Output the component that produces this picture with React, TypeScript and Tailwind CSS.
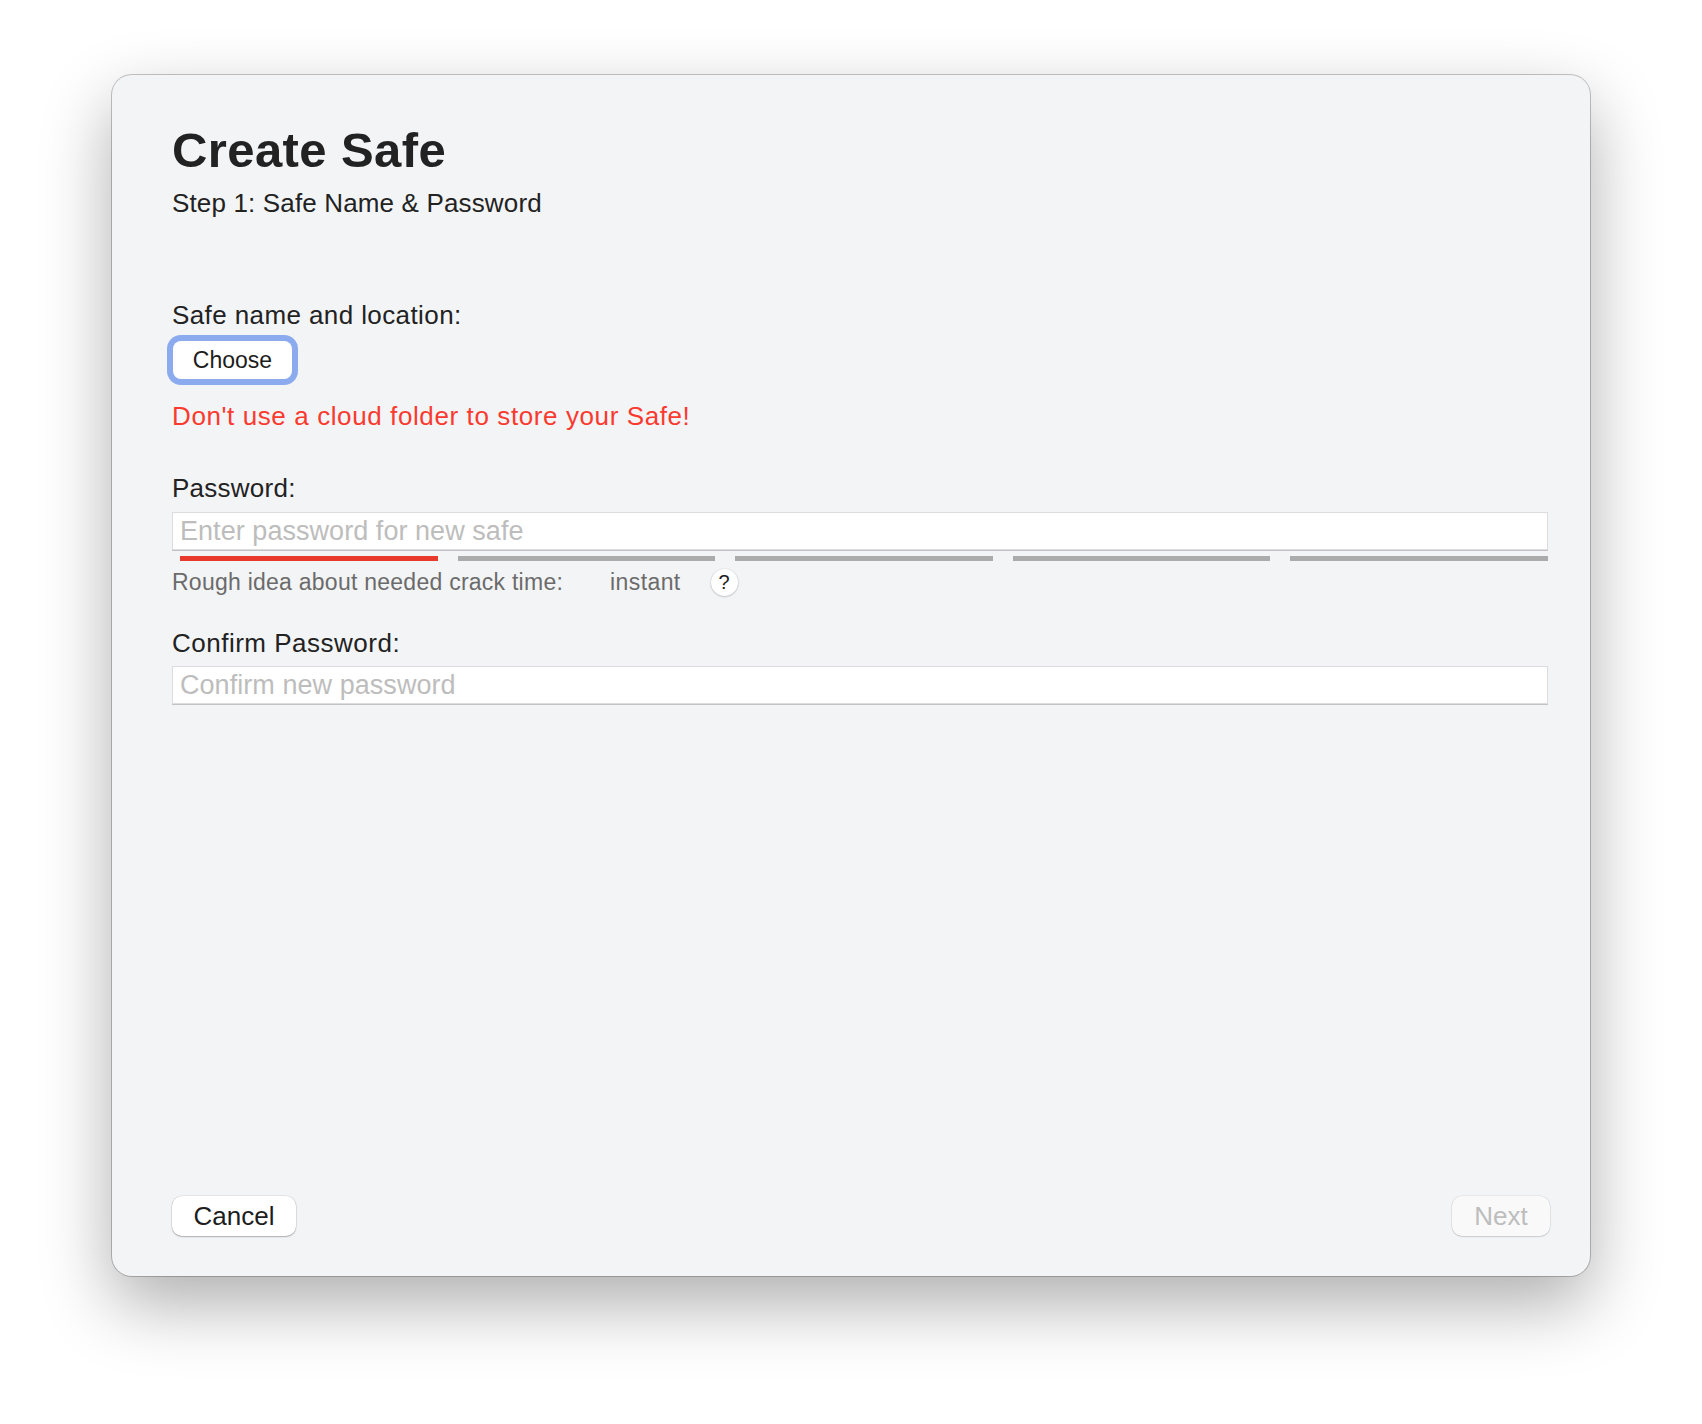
import React from "react";

const font = { fontFamily: '"Liberation Sans", Arial, sans-serif' };

function StrengthBars({ level }: { level: number }) {
  return (
    <div className="mt-[6px] flex h-[5px] gap-[20px] pl-[8px]">
      {[0, 1, 2, 3, 4].map((i) => (
        <div key={i} className={i < level ? "flex-1 bg-[#e8392d]" : "flex-1 bg-[#ababab]"} />
      ))}
    </div>
  );
}

function TextField({ placeholder }: { placeholder: string }) {
  return (
    <input
      type="password"
      placeholder={placeholder}
      className="h-[38px] w-full border border-[#dcdcdf] bg-white px-[7px] text-[27px] tracking-[0.05px] text-[#222] shadow-[0_1px_0_#c2c2c4] outline-none placeholder:text-[#bdbdbd]"
    />
  );
}

export default function App() {
  return (
    <div className="min-h-[1424px] bg-white pl-[112px] pt-[75px]" style={font}>
      <div className="flex h-[1201px] w-[1478px] flex-col rounded-[20px] bg-[#f3f4f6] pl-[60px] pr-[42px] pt-[50px] pb-[40px] shadow-[0_0_0_1px_rgba(0,0,0,0.22),0_28px_70px_rgba(0,0,0,0.32)]">
        {/* Header */}
        <h1 className="text-[49px] font-bold leading-[50px] tracking-[0.4px] text-[#222]">Create Safe</h1>
        <p className="mt-[12px] text-[26px] leading-[32px] tracking-[0.15px] text-[#222]">Step 1: Safe Name &amp; Password</p>

        {/* Safe location */}
        <label className="mt-[80px] text-[26px] leading-[32px] tracking-[0.4px] text-[#222]">Safe name and location:</label>
        <button className="ml-[1px] mt-[10px] h-[38px] w-[119px] rounded-[8px] bg-white text-[23px] text-[#1d1d1d] shadow-[0_0_0_6px_#8cabef,0_1px_1px_rgba(0,0,0,0.15)]">
          Choose
        </button>
        <p className="mt-[21px] text-[26px] leading-[32px] tracking-[0.6px] text-[#fa3a2f]">Don't use a cloud folder to store your Safe!</p>

        {/* Password */}
        <label className="mt-[40px] text-[26px] leading-[32px] tracking-[0.25px] text-[#222]">Password:</label>
        <div className="mt-[8px]">
          <TextField placeholder="Enter password for new safe" />
        </div>
        <StrengthBars level={1} />
        <div className="mt-[7px] flex h-[28px] items-center text-[23px] text-[#6b6b6b]">
          <span className="tracking-[0.25px]">Rough idea about needed crack time:</span>
          <span className="ml-[47px] tracking-[0.4px]">instant</span>
          <span className="ml-[30px] flex h-[27px] w-[27px] items-center justify-center rounded-full bg-white text-[20px] text-[#1d1d1d] shadow-[0_0.5px_2px_rgba(0,0,0,0.32)]">
            ?
          </span>
        </div>

        {/* Confirm */}
        <label className="mt-[31px] text-[26px] leading-[32px] tracking-[0.5px] text-[#222]">Confirm Password:</label>
        <div className="mt-[7px]">
          <TextField placeholder="Confirm new password" />
        </div>

        <div className="flex-1" />

        {/* Footer */}
        <div className="-mr-[2px] flex items-center justify-between">
          <button className="h-[40px] w-[124px] rounded-[10px] bg-white text-[26px] text-[#1d1d1d] shadow-[0_0_0_0.5px_rgba(0,0,0,0.12),0_1px_1.5px_rgba(0,0,0,0.25)]">
            Cancel
          </button>
          <button
            disabled
            className="h-[40px] w-[98px] rounded-[10px] bg-[#f9f9fa] text-[26px] text-[#bdbdbd] shadow-[0_0_0_0.5px_rgba(0,0,0,0.1),0_1px_1.5px_rgba(0,0,0,0.12)]"
          >
            Next
          </button>
        </div>
      </div>
    </div>
  );
}
